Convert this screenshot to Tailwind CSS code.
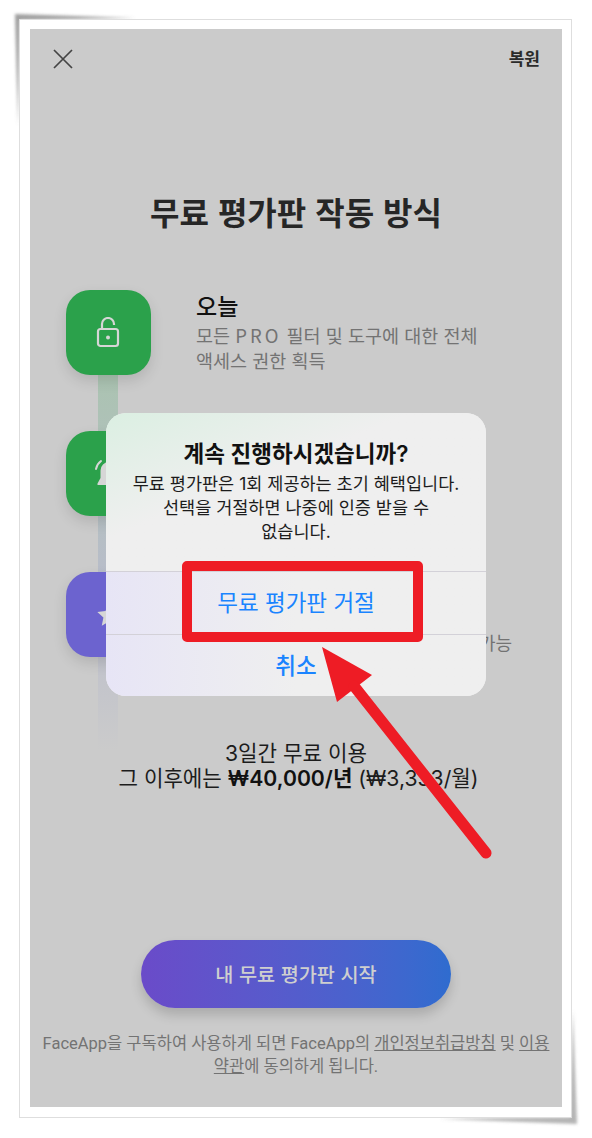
<!DOCTYPE html>
<html lang="ko"><head><meta charset="utf-8">
<script src="https://cdn.jsdelivr.net/npm/@tailwindcss/browser@4"></script>
</head>
<body class="bg-white m-0 font-['Noto_Sans_CJK_KR',sans-serif]">
<div class="relative w-[592px] h-[1138px] overflow-hidden bg-white pl-[19px] pt-[19px]">
  <svg class="absolute left-0 top-0 w-[592px] h-[1138px]" viewBox="0 0 592 1138" aria-hidden="true">
    <defs><filter id="b" x="-20%" y="-20%" width="140%" height="140%"><feGaussianBlur stdDeviation="1.8"/></filter></defs>
    <polygon points="15,14 135,18 20,20 18,125" fill="#777" fill-opacity="0.7" filter="url(#b)"/>
    <polygon points="577,1124 440,1119 570,1117 573,1010" fill="#777" fill-opacity="0.55" filter="url(#b)"/>
  </svg>
  <div class="relative w-[553px] h-[1099px] bg-white border border-[#dedede] pl-[10px] pt-[9px]">
    <div class="relative w-[532px] h-[1078px] bg-[#cbcbcb] flex flex-col items-stretch">
      <!-- header -->
      <div class="flex items-start justify-between pl-[23px] pr-[22px] pt-[20px] h-[60px]">
        <svg class="w-[20px] h-[20px]" viewBox="0 0 20 20" fill="none" stroke="#444" stroke-width="1.7"><path d="M1 1 19 19M19 1 1 19"/></svg>
        <span class="text-[17px] leading-[20px] font-bold text-[#2b2b2b] -mt-[1px]">복원</span>
      </div>
      <h1 class="mt-[99px] text-center text-[32px] leading-[46px] font-bold text-[#262626]">무료 평가판 작동 방식</h1>
      <!-- steps -->
      <div class="relative mt-[56px] ml-[36px] flex flex-col gap-[56px]">
        <div class="absolute left-[32px] top-[60px] w-[20px] h-[401px] bg-linear-to-b from-[#a9c4ae] via-[#b9bccb] via-60% to-[#cbcbcb]"></div>
        <div class="relative flex gap-[45px]">
          <div class="w-[85px] h-[85px] shrink-0 rounded-[24px] bg-[#2ba14b] shadow-[0_6px_14px_rgba(0,0,0,0.12)] flex items-center justify-center">
            <svg class="w-[24px] h-[31px] -ml-[1px]" viewBox="0 0 24 31" fill="none" stroke="#d6d6d6" stroke-width="2.200"><rect x="2" y="12" width="20" height="17" rx="2.5"/><path d="M6 12V7a6 6 0 0 1 12 0v1"/><circle cx="12" cy="20.500" r="2" fill="#d6d6d6" stroke="none"/></svg>
          </div>
          <div>
            <div class="text-[23px] leading-[30px] font-medium text-[#111]">오늘</div>
            <p class="mt-[3px] text-[18.500px] leading-[25px] text-[#737373]">모든 <span class="tracking-[3px]">PRO</span> 필터 및 도구에 대한 전체<br>액세스 권한 획득</p>
          </div>
        </div>
        <div class="relative flex gap-[45px]">
          <div class="w-[85px] h-[85px] shrink-0 rounded-[24px] bg-[#2ba14b] shadow-[0_6px_14px_rgba(0,0,0,0.12)] flex items-center justify-center">
            <svg class="w-[32px] h-[32px]" viewBox="0 0 32 32" fill="#d6d6d6"><path d="M3 11Q4 6 8 3" fill="none" stroke="#d6d6d6" stroke-width="2" stroke-linecap="round"/><path d="M16 4a8.500 8.500 0 0 1 8.500 8.500V20l3 5.500V27H4.500v-1.500l3-5.500v-7.500A8.500 8.500 0 0 1 16 4z"/></svg>
          </div>
        </div>
        <div class="relative flex gap-[45px]">
          <div class="w-[85px] h-[85px] shrink-0 rounded-[24px] bg-[#6c63cf] shadow-[0_6px_14px_rgba(0,0,0,0.12)] flex items-center justify-center">
            <svg class="w-[28px] h-[28px]" viewBox="0 0 24 24" fill="#d6d6d6"><path d="M12 2l3 6.600 7 .8-5.200 4.800 1.400 7L12 17.600 5.800 21.200l1.400-7L2 9.400l7-.8z"/></svg>
          </div>
          <div class="flex-1 text-right pr-[50px] pt-[58px] text-[18px] leading-[25px] text-[#737373]">가능</div>
        </div>
      </div>
      <!-- price -->
      <div class="mt-[84px] text-center text-[21.200px] leading-[25px] text-[#1c1c1c] font-['Inter','Noto_Sans_CJK_KR',sans-serif]">
        <div>3일간 무료 이용</div>
        <div class="pl-[5px]">그 이후에는 <b class="font-semibold text-[#111]">₩40,000/년</b> (₩3,333/월)</div>
      </div>
      <!-- cta -->
      <div class="mt-[149px] mx-auto w-[310px] h-[68px] rounded-full bg-linear-to-r from-[#6a4bc9] to-[#2f6ccf] shadow-[0_7px_12px_rgba(0,0,0,0.16)] flex items-center justify-center text-[19.700px] font-medium text-[#cfcfcf]">내 무료 평가판 시작</div>
      <p class="mt-[24px] mx-auto w-[520px] text-center text-[16.500px] leading-[23px] text-[#737373] font-['Roboto','Noto_Sans_CJK_KR',sans-serif]">FaceApp을 구독하여 사용하게 되면 FaceApp의 <u>개인정보취급방침</u> 및 <u>이용</u><br><u>약관</u>에 동의하게 됩니다.</p>

      <!-- dialog overlay -->
      <div class="absolute left-[76px] top-[384px] w-[380px] h-[283px] rounded-[20px] overflow-hidden bg-[#efefef] font-['Inter','Noto_Sans_CJK_KR',sans-serif] flex flex-col text-center">
        <div class="absolute inset-x-0 top-0 h-[158px] bg-linear-to-br from-[#dbefe2] via-[#efefef] via-40% to-[#efefef]"></div>
        <div class="absolute inset-x-0 bottom-0 h-[125px] bg-linear-to-r from-[#e7e5f6] via-[#efefef] via-50% to-[#efefef]"></div>
        <div class="relative h-[158px] pt-[26px]">
          <div class="text-[22.500px] leading-[30px] font-semibold text-[#111]">계속 진행하시겠습니까?</div>
          <p class="mt-[3px] text-[17.500px] leading-[24px] text-[#1c1c1c]">무료 평가판은 1회 제공하는 초기 혜택입니다.<br>선택을 거절하면 나중에 인증 받을 수<br>없습니다.</p>
        </div>
        <div class="relative h-[63px] border-t border-[#d3d1d8] flex items-center justify-center text-[22.500px] text-[#1a84ff]">무료 평가판 거절</div>
        <div class="relative flex-1 border-t border-[#d3d1d8] flex items-center justify-center text-[22.500px] text-[#1a84ff] font-medium">취소</div>
      </div>
      <!-- red annotation -->
      <div class="absolute left-[152px] top-[532px] w-[241px] h-[81px] border-[10px] border-[#ee1c25] rounded-[5px]"></div>
      <svg class="absolute left-[270px] top-[600px] w-[200px] h-[240px]" viewBox="270 600 200 240" aria-hidden="true">
        <g transform="translate(-30 -29)"><polygon points="322,647 372,675 337,702" fill="#ee1c25"/><path d="M354 686 486 853" stroke="#ee1c25" stroke-width="11" stroke-linecap="round"/></g>
      </svg>
    </div>
  </div>
</div>
</body></html>
